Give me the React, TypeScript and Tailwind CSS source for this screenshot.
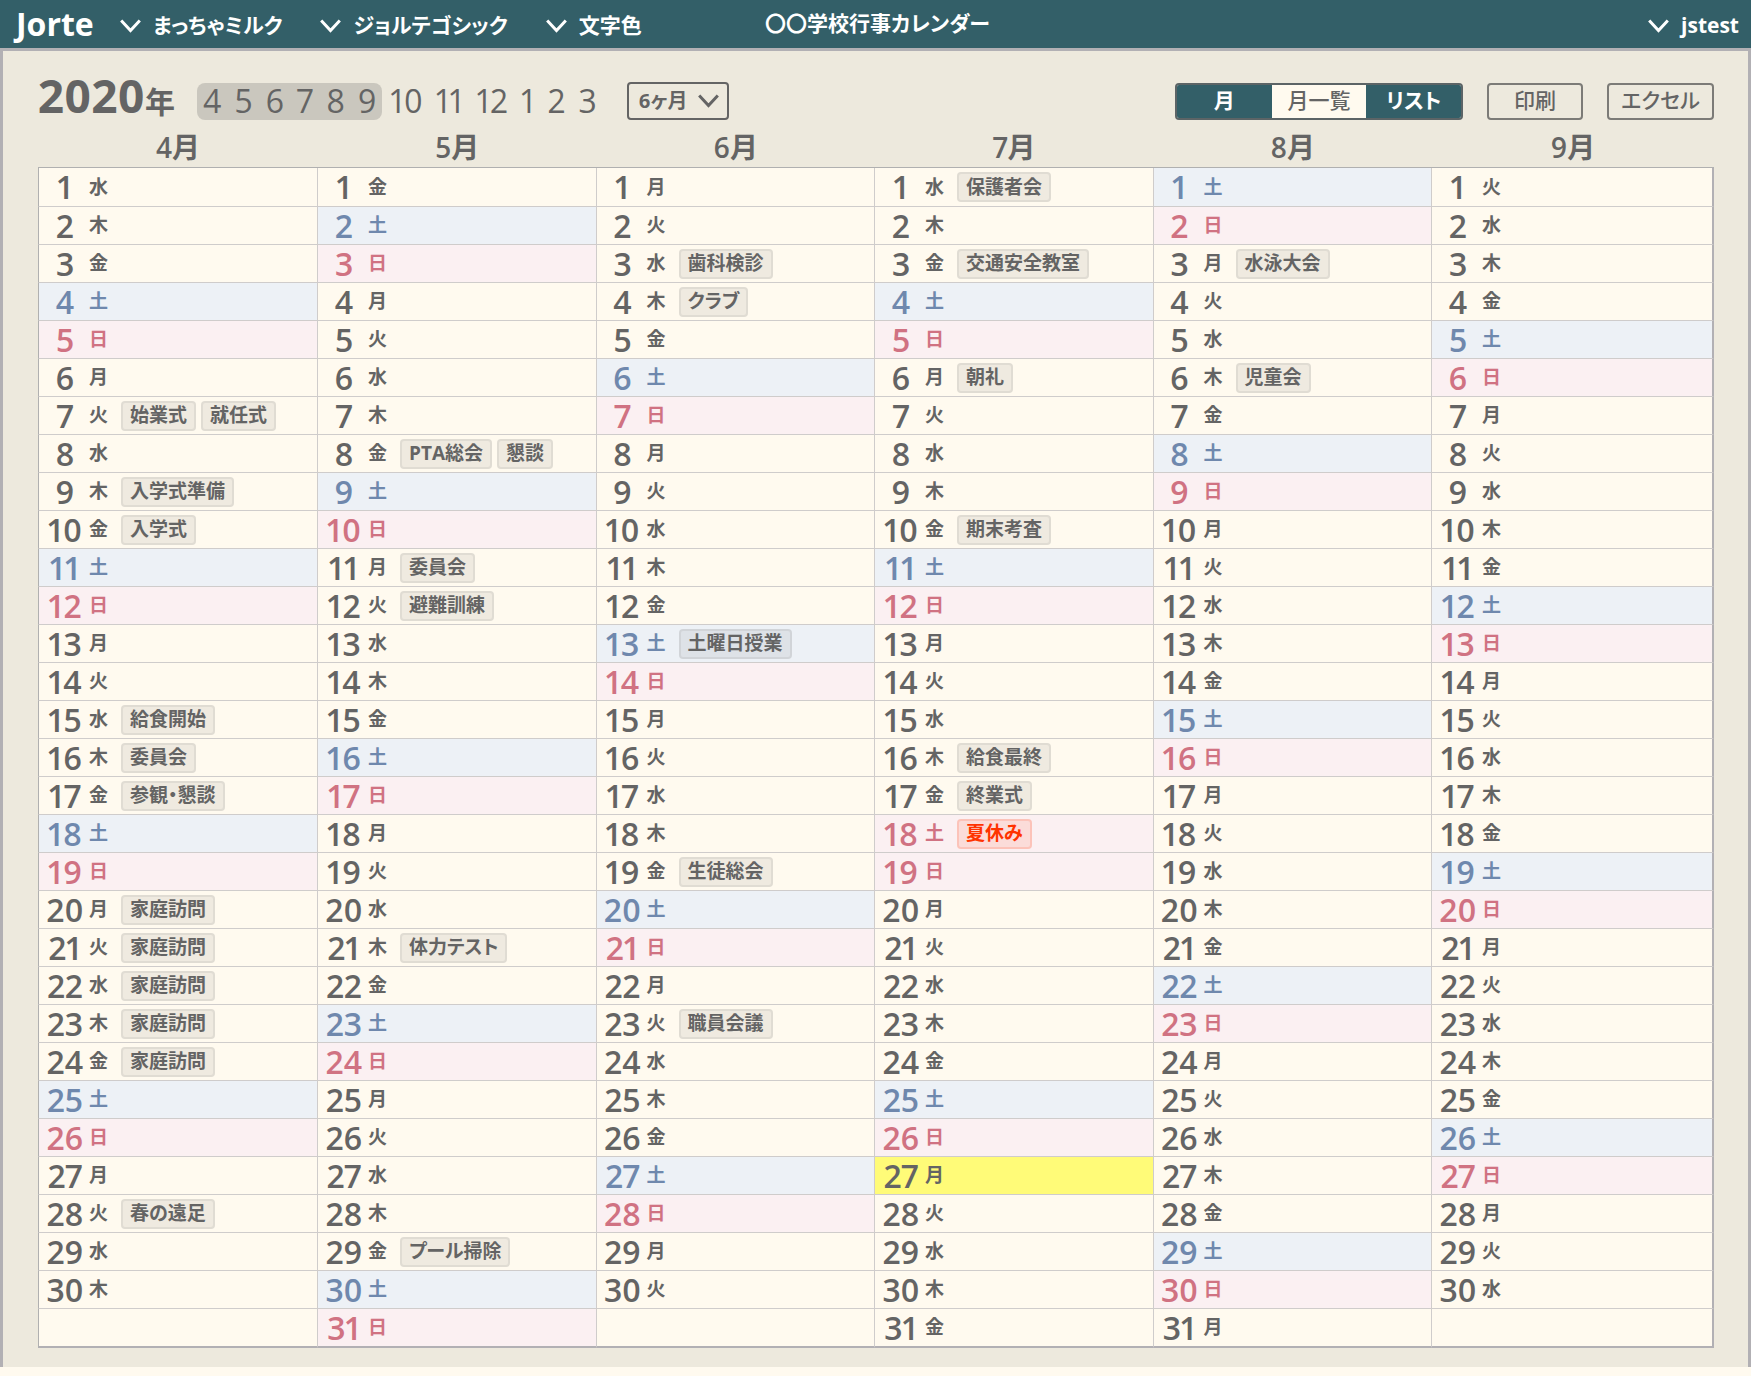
import React, { useState } from 'react';

type DayTone = 'weekday' | 'saturday' | 'holiday' | 'today';
type CalendarEvent = { title: string; accent?: boolean };

type Month = {
  month: number;
  days: number;
  // weekday index of the 1st, 0 = 日
  start: number;
  events: Record<number, CalendarEvent[]>;
  tones?: Record<number, DayTone>;
};

const WEEKDAYS = ['日', '月', '火', '水', '木', '金', '土'];
const ROWS = Array.from({ length: 31 }, (_, i) => i + 1);
const VISIBLE_MONTHS = [4, 5, 6, 7, 8, 9];
const OTHER_MONTHS = [10, 11, 12, 1, 2, 3];

const MONTHS: Month[] = [
  {
    month: 4,
    days: 30,
    start: 3,
    events: {
      7: [{ title: '始業式' }, { title: '就任式' }],
      9: [{ title: '入学式準備' }],
      10: [{ title: '入学式' }],
      15: [{ title: '給食開始' }],
      16: [{ title: '委員会' }],
      17: [{ title: '参観・懇談' }],
      20: [{ title: '家庭訪問' }],
      21: [{ title: '家庭訪問' }],
      22: [{ title: '家庭訪問' }],
      23: [{ title: '家庭訪問' }],
      24: [{ title: '家庭訪問' }],
      28: [{ title: '春の遠足' }],
    },
  },
  {
    month: 5,
    days: 31,
    start: 5,
    events: {
      8: [{ title: 'PTA総会' }, { title: '懇談' }],
      11: [{ title: '委員会' }],
      12: [{ title: '避難訓練' }],
      21: [{ title: '体力テスト' }],
      29: [{ title: 'プール掃除' }],
    },
  },
  {
    month: 6,
    days: 30,
    start: 1,
    events: {
      3: [{ title: '歯科検診' }],
      4: [{ title: 'クラブ' }],
      13: [{ title: '土曜日授業' }],
      19: [{ title: '生徒総会' }],
      23: [{ title: '職員会議' }],
    },
  },
  {
    month: 7,
    days: 31,
    start: 3,
    events: {
      1: [{ title: '保護者会' }],
      3: [{ title: '交通安全教室' }],
      6: [{ title: '朝礼' }],
      10: [{ title: '期末考査' }],
      16: [{ title: '給食最終' }],
      17: [{ title: '終業式' }],
      18: [{ title: '夏休み', accent: true }],
    },
    tones: { 18: 'holiday', 27: 'today' },
  },
  {
    month: 8,
    days: 31,
    start: 6,
    events: {
      3: [{ title: '水泳大会' }],
      6: [{ title: '児童会' }],
    },
  },
  { month: 9, days: 30, start: 2, events: {} },
];

const TONE_CLASSES: Record<DayTone, string> = {
  weekday: 'bg-[#fffaef] text-[#646464]',
  saturday: 'bg-[#edf1f6] text-[#6f88ad]',
  holiday: 'bg-[#fbf0f2] text-[#d07282]',
  today: 'bg-[#fffb78] text-[#646464]',
};

function Chevron() {
  return (
    <svg width="21" height="14" viewBox="0 0 21 14" fill="none" stroke="currentColor" strokeWidth="3" aria-hidden="true">
      <path d="M1.2 1.5 10.5 11.5 19.8 1.5" />
    </svg>
  );
}

function HeaderMenu({ label }: { label: string }) {
  return (
    <button type="button" aria-haspopup="menu" className="flex items-center gap-3 pt-1 whitespace-nowrap">
      <Chevron />
      <span>{label}</span>
    </button>
  );
}

function EventChip({ event }: { event: CalendarEvent }) {
  const color = event.accent
    ? 'border-[#ff3300]/15 bg-[#ff3300]/10 text-[#ff3300]'
    : 'border-[#646464]/10 bg-[#646464]/10 text-[#646464]';
  return (
    <span className={`flex h-[30px] items-center rounded-sm border-2 px-[7px] text-[19px] leading-none font-bold whitespace-nowrap ${color}`}>
      {event.title}
    </span>
  );
}

function DayCell({ data, day, last }: { data: Month; day: number; last: boolean }) {
  const exists = day <= data.days;
  const weekday = (data.start + day - 1) % 7;
  let tone: DayTone = 'weekday';
  if (exists) {
    if (weekday === 6) tone = 'saturday';
    if (weekday === 0) tone = 'holiday';
    tone = data.tones?.[day] ?? tone;
  }
  const left = data.month === 4 ? 'border-l border-l-[#b0b0b0]' : '';
  const right = last ? 'border-r-2 border-r-[#b2b0b4]' : 'border-r border-r-[#cfcccb]';
  const bottom = day === 31 ? 'border-b-2 border-b-[#b2b0b4]' : 'border-b border-b-[#cfcccb]';

  return (
    <td className={`p-0 ${left} ${right} ${bottom} ${TONE_CLASSES[tone]}`}>
      <div className={day === 1 ? 'flex h-[38px] items-center' : 'flex h-[37px] items-center'}>
        {exists && (
          <>
            <span className="w-[50px] pl-0.5 text-center text-[32px] leading-none font-semibold">{day}</span>
            <span className="w-8 text-[19px] leading-none font-semibold">{WEEKDAYS[weekday]}</span>
            <div className="flex gap-[5px]">
              {(data.events[day] ?? []).map(e => <EventChip key={e.title} event={e} />)}
            </div>
          </>
        )}
      </div>
    </td>
  );
}

export default function App() {
  const [view, setView] = useState('月一覧');
  const [span, setSpan] = useState('6ヶ月');

  return (
    <div className="min-h-screen bg-[#fffaef] font-['Open_Sans','Noto_Sans_CJK_JP',sans-serif] text-[#646464] proportional-nums [font-feature-settings:'palt']">
      <header className="grid h-12 grid-cols-[1fr_auto_1fr] items-center bg-[#335f68] pr-3 pl-4 text-[21px] font-bold text-white">
        <div className="flex items-center">
          <a href="#" className="w-[104px] text-[32px] leading-none">Jorte</a>
          <nav className="flex items-center gap-[38px]">
            <HeaderMenu label="まっちゃミルク" />
            <HeaderMenu label="ジョルテゴシック" />
            <HeaderMenu label="文字色" />
          </nav>
        </div>
        <h1>〇〇学校行事カレンダー</h1>
        <div className="flex justify-end">
          <HeaderMenu label="jstest" />
        </div>
      </header>

      <main className="border-x-3 border-t-3 border-[#b2b0b4] bg-[#ede9dd] pt-5 pr-[34px] pb-[19px] pl-[35px]">
        <div className="flex h-[60px] items-center">
          <h2 className="pb-3 text-[46px] leading-none font-bold whitespace-nowrap">
            2020<span className="text-[30px]">年</span>
          </h2>
          <div className="ml-[22px] flex items-center text-[32px] leading-none">
            <div className="flex h-[37px] items-center gap-[13px] rounded-lg bg-[#cac7be] px-[6px]">
              {VISIBLE_MONTHS.map(m => <button key={m} type="button">{m}</button>)}
            </div>
            <div className="ml-2 flex items-center gap-[13px]">
              {OTHER_MONTHS.map(m => <button key={m} type="button">{m}</button>)}
            </div>
          </div>
          <div className="relative ml-[30px]">
            <select
              aria-label="表示期間"
              value={span}
              onChange={e => setSpan(e.target.value)}
              className="h-[38px] w-[102px] appearance-none rounded-sm border-2 border-[#646464] pl-[10px] text-[20px] font-bold"
            >
              <option>6ヶ月</option>
              <option>12ヶ月</option>
            </select>
            <div className="pointer-events-none absolute inset-y-0 right-[10px] flex items-center">
              <Chevron />
            </div>
          </div>

          <div className="ml-auto flex text-[21px] font-medium">
            <div className="flex h-[37px] w-[288px] overflow-hidden rounded-sm border-2 border-[#5c6466]">
              {['月', '月一覧', 'リスト'].map(v => (
                <button
                  key={v}
                  type="button"
                  aria-pressed={view === v}
                  onClick={() => setView(v)}
                  className={view === v ? 'flex-1 bg-[#fffaef]' : 'flex-1 bg-[#335f68] font-semibold text-white'}
                >
                  {v}
                </button>
              ))}
            </div>
            <button type="button" className="ml-6 h-[37px] w-24 rounded-sm border-2 border-[#7c7b77]">印刷</button>
            <button type="button" className="ml-6 h-[37px] w-[107px] rounded-sm border-2 border-[#7c7b77]">エクセル</button>
          </div>
        </div>

        <table className="w-full table-fixed border-separate border-spacing-0">
          <colgroup>
            <col className="w-[280px]" />
            <col span={4} />
            <col className="w-[282px]" />
          </colgroup>
          <thead>
            <tr>
              {MONTHS.map(m => (
                <th key={m.month} scope="col" className="h-[37px] border-b border-[#b0b0b0] p-0 pb-1 text-[28px] leading-none font-semibold">
                  {m.month}月
                </th>
              ))}
            </tr>
          </thead>
          <tbody>
            {ROWS.map(day => (
              <tr key={day}>
                {MONTHS.map((m, i) => (
                  <DayCell key={m.month} data={m} day={day} last={i === MONTHS.length - 1} />
                ))}
              </tr>
            ))}
          </tbody>
        </table>
      </main>
    </div>
  );
}
